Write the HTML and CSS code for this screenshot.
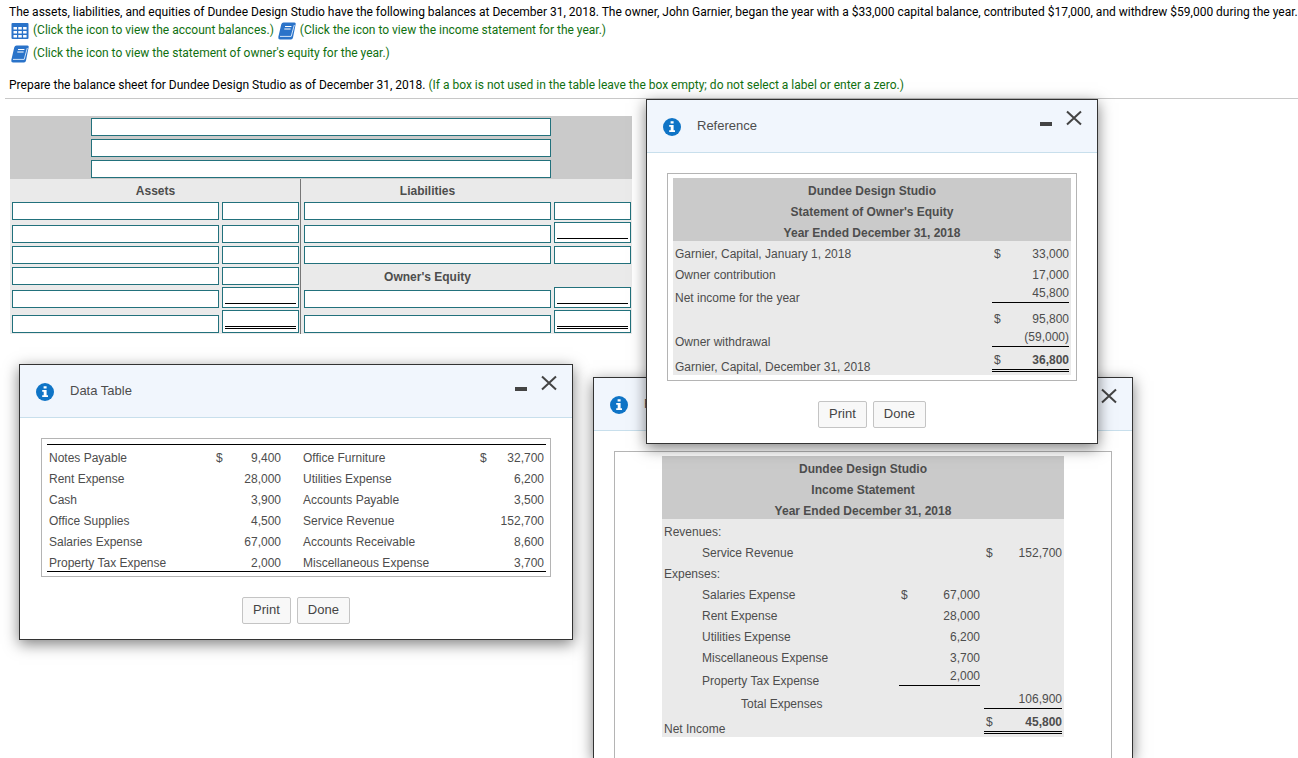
FILE: index.html
```html
<!DOCTYPE html>
<html lang="en">
<head>
	<title>Dundee Design Studio</title>
	<meta charset="utf-8">
	<meta name="viewport" content="width=device-width, initial-scale=1">
	<link rel="stylesheet" href="styles.css">
</head>

<body>

<!-- shared icons -->
<svg class="sprite" aria-hidden="true">
	<symbol id="ico_table" viewBox="0 0 18 18">
		<rect x="0.5" y="1" width="17" height="16" rx="1" fill="#2a73c9"/>
		<path d="M2.5 5h3.5v2.6H2.5zM7.3 5h3.5v2.6H7.3zM12.1 5h3.5v2.6h-3.5zM2.5 9h3.5v2.6H2.5zM7.3 9h3.5v2.6H7.3zM12.1 9h3.5v2.6h-3.5zM2.5 13h3.5v2.6H2.5zM7.3 13h3.5v2.6H7.3zM12.1 13h3.5v2.6h-3.5z" fill="#fff"/>
	</symbol>
	<symbol id="ico_book" viewBox="0 0 18 18">
		<path d="M5.5 0.5H16.5Q18 0.5 17.7 2L15 15.5Q14.6 17.5 13 17.5H2Q0 17.5 0.3 15L3.3 2.2Q3.8 0.5 5.5 0.5Z" fill="#2a73c9"/>
		<path d="M2 14.4H13.2L16.3 3" fill="none" stroke="#cfe2f8" stroke-width="1"/>
		<path d="M7 4.5H13.4M6.3 7H12.6" stroke="#fff" stroke-width="1.2"/>
	</symbol>
	<symbol id="ico_info" viewBox="0 0 18 18">
		<circle cx="9" cy="9" r="9" fill="#0f74c6"/>
		<path d="M7.6 3.2h3v2.4h-3zM6.2 7.1h4.4v5.2h1.4v1.7H6.2v-1.7h1.5V8.8H6.2z" fill="#fff"/>
	</symbol>
	<symbol id="ico_close" viewBox="0 0 16 16">
		<path d="M1 1.5L15 14.5M15 1.5L1 14.5" stroke="#444" stroke-width="2" fill="none"/>
	</symbol>
	<symbol id="ico_min" viewBox="0 0 16 16">
		<path d="M2 12h12v4H2z" fill="#444"/>
	</symbol>
</svg>

<div class="question">
	<p>The assets, liabilities, and equities of Dundee Design Studio have the following balances at December 31, 2018. The owner, John Garnier, began the year with a $33,000 capital balance, contributed $17,000, and withdrew $59,000 during the year.</p>
	<div class="links">
		<a href="#accounts"><svg class="ico"><use href="#ico_table"/></svg>(Click the icon to view the account balances.)</a>
		<a href="#income"><svg class="ico"><use href="#ico_book"/></svg>(Click the icon to view the income statement for the year.)</a>
	</div>
	<div class="links">
		<a href="#equity"><svg class="ico"><use href="#ico_book"/></svg>(Click the icon to view the statement of owner's equity for the year.)</a>
	</div>
	<p class="task">Prepare the balance sheet for Dundee Design Studio as of December 31, 2018. <span class="note">(If a box is not used in the table leave the box empty; do not select a label or enter a zero.)</span></p>
</div>

<form class="answer">
	<table class="sheet">
		<colgroup>
			<col class="c_label"><col class="c_amt"><col class="c_label2"><col class="c_amt">
		</colgroup>
		<thead>
			<tr><td colspan="4"><input class="box heading" type="text" aria-label="Company name"></td></tr>
			<tr><td colspan="4"><input class="box heading" type="text" aria-label="Statement name"></td></tr>
			<tr><td colspan="4"><input class="box heading" type="text" aria-label="Statement date"></td></tr>
		</thead>
		<tbody>
			<tr>
				<th colspan="2">Assets</th>
				<th class="split">Liabilities</th>
				<td></td>
			</tr>
			<tr>
				<td><input class="box" type="text" aria-label="Asset 1"></td>
				<td><input class="box" type="text" aria-label="Asset 1 amount"></td>
				<td class="split"><input class="box" type="text" aria-label="Liability 1"></td>
				<td><input class="box" type="text" aria-label="Liability 1 amount"></td>
			</tr>
			<tr>
				<td><input class="box" type="text" aria-label="Asset 2"></td>
				<td><input class="box" type="text" aria-label="Asset 2 amount"></td>
				<td class="split"><input class="box" type="text" aria-label="Liability 2"></td>
				<td><div class="sum"><input type="text" aria-label="Liability 2 amount"></div></td>
			</tr>
			<tr>
				<td><input class="box" type="text" aria-label="Asset 3"></td>
				<td><input class="box" type="text" aria-label="Asset 3 amount"></td>
				<td class="split"><input class="box" type="text" aria-label="Total liabilities"></td>
				<td><input class="box" type="text" aria-label="Total liabilities amount"></td>
			</tr>
			<tr>
				<td><input class="box" type="text" aria-label="Asset 4"></td>
				<td><input class="box" type="text" aria-label="Asset 4 amount"></td>
				<th class="split">Owner's Equity</th>
				<td></td>
			</tr>
			<tr>
				<td><input class="box" type="text" aria-label="Asset 5"></td>
				<td><div class="sum"><input type="text" aria-label="Asset 5 amount"></div></td>
				<td class="split"><input class="box" type="text" aria-label="Equity"></td>
				<td><div class="sum"><input type="text" aria-label="Equity amount"></div></td>
			</tr>
			<tr>
				<td><input class="box" type="text" aria-label="Total assets"></td>
				<td><div class="sum total"><input type="text" aria-label="Total assets amount"></div></td>
				<td class="split"><input class="box" type="text" aria-label="Total liabilities and equity"></td>
				<td><div class="sum total"><input type="text" aria-label="Total liabilities and equity amount"></div></td>
			</tr>
		</tbody>
	</table>
</form>

<section class="popup" id="accounts">
	<header>
		<svg class="ico"><use href="#ico_info"/></svg>
		<h2>Data Table</h2>
		<button class="tool" type="button" aria-label="Minimize"><svg><use href="#ico_min"/></svg></button>
		<button class="tool" type="button" aria-label="Close"><svg><use href="#ico_close"/></svg></button>
	</header>
	<div class="frame ruled">
		<table class="report">
			<colgroup><col><col class="w71"><col class="w18"><col class="w175"><col class="w70"></colgroup>
			<tr><td>Notes Payable</td><td><div class="amt"><span>$</span>9,400</div></td><td></td><td>Office Furniture</td><td><div class="amt"><span>$</span>32,700</div></td></tr>
			<tr><td>Rent Expense</td><td><div class="amt">28,000</div></td><td></td><td>Utilities Expense</td><td><div class="amt">6,200</div></td></tr>
			<tr><td>Cash</td><td><div class="amt">3,900</div></td><td></td><td>Accounts Payable</td><td><div class="amt">3,500</div></td></tr>
			<tr><td>Office Supplies</td><td><div class="amt">4,500</div></td><td></td><td>Service Revenue</td><td><div class="amt">152,700</div></td></tr>
			<tr><td>Salaries Expense</td><td><div class="amt">67,000</div></td><td></td><td>Accounts Receivable</td><td><div class="amt">8,600</div></td></tr>
			<tr><td>Property Tax Expense</td><td><div class="amt">2,000</div></td><td></td><td>Miscellaneous Expense</td><td><div class="amt">3,700</div></td></tr>
		</table>
	</div>
	<footer>
		<button class="btn" type="button">Print</button>
		<button class="btn" type="button">Done</button>
	</footer>
</section>

<section class="popup" id="income">
	<header>
		<svg class="ico"><use href="#ico_info"/></svg>
		<h2>Reference</h2>
		<button class="tool" type="button" aria-label="Minimize"><svg><use href="#ico_min"/></svg></button>
		<button class="tool" type="button" aria-label="Close"><svg><use href="#ico_close"/></svg></button>
	</header>
	<div class="frame">
		<table class="report shaded">
			<colgroup><col><col class="w85"><col class="w82"></colgroup>
			<thead>
				<tr><th colspan="3">Dundee Design Studio</th></tr>
				<tr><th colspan="3">Income Statement</th></tr>
				<tr><th colspan="3">Year Ended December 31, 2018</th></tr>
			</thead>
			<tbody>
				<tr><td>Revenues:</td><td></td><td></td></tr>
				<tr><td class="in1">Service Revenue</td><td></td><td><div class="amt"><span>$</span>152,700</div></td></tr>
				<tr><td>Expenses:</td><td></td><td></td></tr>
				<tr><td class="in1">Salaries Expense</td><td><div class="amt"><span>$</span>67,000</div></td><td></td></tr>
				<tr><td class="in1">Rent Expense</td><td><div class="amt">28,000</div></td><td></td></tr>
				<tr><td class="in1">Utilities Expense</td><td><div class="amt">6,200</div></td><td></td></tr>
				<tr><td class="in1">Miscellaneous Expense</td><td><div class="amt">3,700</div></td><td></td></tr>
				<tr><td class="in1">Property Tax Expense</td><td><div class="amt line">2,000</div></td><td></td></tr>
				<tr><td class="in2">Total Expenses</td><td></td><td><div class="amt line">106,900</div></td></tr>
				<tr><td>Net Income</td><td></td><td><div class="amt double"><span>$</span><b>45,800</b></div></td></tr>
			</tbody>
		</table>
	</div>
</section>

<section class="popup" id="equity">
	<header>
		<svg class="ico"><use href="#ico_info"/></svg>
		<h2>Reference</h2>
		<button class="tool" type="button" aria-label="Minimize"><svg><use href="#ico_min"/></svg></button>
		<button class="tool" type="button" aria-label="Close"><svg><use href="#ico_close"/></svg></button>
	</header>
	<div class="frame">
		<table class="report shaded">
			<colgroup><col><col class="w81"></colgroup>
			<thead>
				<tr><th colspan="2">Dundee Design Studio</th></tr>
				<tr><th colspan="2">Statement of Owner's Equity</th></tr>
				<tr><th colspan="2">Year Ended December 31, 2018</th></tr>
			</thead>
			<tbody>
				<tr><td>Garnier, Capital, January 1, 2018</td><td><div class="amt"><span>$</span>33,000</div></td></tr>
				<tr><td>Owner contribution</td><td><div class="amt">17,000</div></td></tr>
				<tr><td>Net income for the year</td><td><div class="amt line">45,800</div></td></tr>
				<tr><td></td><td><div class="amt"><span>$</span>95,800</div></td></tr>
				<tr><td>Owner withdrawal</td><td><div class="amt line">(59,000)</div></td></tr>
				<tr><td>Garnier, Capital, December 31, 2018</td><td><div class="amt double"><span>$</span><b>36,800</b></div></td></tr>
			</tbody>
		</table>
	</div>
	<footer>
		<button class="btn" type="button">Print</button>
		<button class="btn" type="button">Done</button>
	</footer>
</section>

</body>
</html>
```
FILE: styles.css
```css
*{
	box-sizing: border-box;
}
body{
	margin: 0;
	height: 100vh;
	overflow: hidden;
	background: #fff;
	color: #000;
	font-family: "Liberation Sans", Arial, sans-serif;
	font-size: 12px;
	line-height: 17px;
}
.sprite{
	display: none;
}
.ico{
	width: 18px;
	height: 18px;
	flex: none;
}

/* question text */
.question{
	margin-left: 5px;
	padding: 4px 0 4px 4px;
	border-bottom: 1px solid #c8c8c8;
	font-family: Roboto, "Liberation Sans", sans-serif;
	white-space: nowrap;
}
.question p{
	margin: 0;
}
.links{
	display: flex;
	gap: 4px;
	height: 23px;
	padding: 1px 0 0 2px;
}
.links a{
	display: flex;
	gap: 4px;
	color: #107010;
	text-decoration: none;
}
.question .task{
	margin-top: 10px;
}
.note{
	color: #107010;
}

/* balance sheet */
.answer{
	padding: 17px 0 0 10px;
}
.sheet, .report{
	border-collapse: separate;
	border-spacing: 0;
	table-layout: fixed;
	line-height: 15px;
}
.sheet{
	width: 622px;
	background: #eaeaea;
	color: #4d4d4d;
}
.sheet thead{
	background: #cacaca;
}
.c_label{
	width: 210px;
}
.c_label2{
	width: 252px;
}
.c_amt{
	width: 80px;
}
.sheet td, .sheet th{
	height: 21px;
	padding: 1px 1px 1px 2px;
	vertical-align: bottom;
}
.sheet thead td{
	padding: 1px;
}
.sheet .split{
	border-left: 1px solid #777;
	padding-left: 3px;
}
.sheet input{
	display: block;
	width: 100%;
	height: 18px;
	padding: 0 2px;
	border: 0;
	border-radius: 0;
	background: #fff;
	font: inherit;
}
.sheet .box, .sum{
	border: 1px solid #22717c;
}
.sheet .heading{
	width: 460px;
	margin: 0 auto;
}
.sum{
	padding: 0 2px 3px;
	background: #fff;
}
.sheet .sum input{
	height: 16px;
	border-bottom: 1px solid #000;
}
.sheet .total input{
	height: 18px;
	border-bottom: 3px double #000;
}

/* popups */
.popup{
	position: absolute;
	border: 1px solid #333;
	background: #fff;
	color: #4d4d4d;
	box-shadow: 0 4px 14px rgba(0,0,0,0.5);
}
#accounts{
	left: 19px;
	top: 364px;
	width: 554px;
}
/* runs down to the bottom of the window */
#income{
	left: 593px;
	top: 377px;
	bottom: 0;
	width: 540px;
	display: flex;
	flex-direction: column;
	border-bottom: 0;
}
#equity{
	left: 646px;
	top: 99px;
	width: 452px;
}
.popup header{
	display: flex;
	flex: none;
	align-items: flex-start;
	height: 53px;
	padding: 10px 15px 0 16px;
	border-bottom: 1px solid #c8dfec;
	background: #f1f6fd;
}
.popup header .ico{
	margin-top: 8px;
}
.popup h2{
	flex: 1;
	margin: 7px 0 0 16px;
	font-size: 13px;
	font-weight: normal;
}
.tool{
	width: 16px;
	height: 16px;
	margin-left: 12px;
	padding: 0;
	border: 0;
	background: none;
	cursor: pointer;
}
.tool svg{
	display: block;
	width: 16px;
	height: 16px;
}
.frame{
	margin: 20px 20px 0;
	padding: 4px 5px 5px;
	border: 1px solid #b4b4b4;
}
#income .frame{
	flex: 1;
	border-bottom: 0;
}
.ruled{
	margin: 20px 21px 0;
	padding: 5px 4px 4px 5px;
}
.ruled .report{
	border-top: 1px solid #000;
	border-bottom: 1px solid #000;
}
.report{
	width: 100%;
}
#income .report{
	width: 402px;
	margin: 0 auto;
}
.report thead{
	background: #cacaca;
}
.report.shaded tbody{
	background: #eaeaea;
}
.report td, .report th{
	height: 21px;
	padding: 3px 2px 0;
	vertical-align: bottom;
}
.report .in1{
	padding-left: 40px;
}
.report .in2{
	padding-left: 79px;
}
.w18{
	width: 18px;
}
.w70{
	width: 70px;
}
.w71{
	width: 71px;
}
.w81{
	width: 81px;
}
.w82{
	width: 82px;
}
.w85{
	width: 85px;
}
.w175{
	width: 175px;
}
.amt{
	display: flex;
	justify-content: flex-end;
	padding-left: 2px;
}
.amt span{
	margin-right: auto;
}
.line, .double{
	margin-bottom: 3px;
	padding-bottom: 1px;
}
.line{
	border-bottom: 1px solid #000;
}
.double{
	border-bottom: 3px double #000;
}
.popup footer{
	display: flex;
	justify-content: center;
	gap: 6px;
	padding: 20px 0 15px;
}
.btn{
	height: 27px;
	padding: 0 10px 2px;
	border: 1px solid #c4c4c4;
	border-radius: 2px;
	background: #f8f8f8;
	color: #444;
	font-family: inherit;
	font-size: 13px;
	cursor: pointer;
}
```
